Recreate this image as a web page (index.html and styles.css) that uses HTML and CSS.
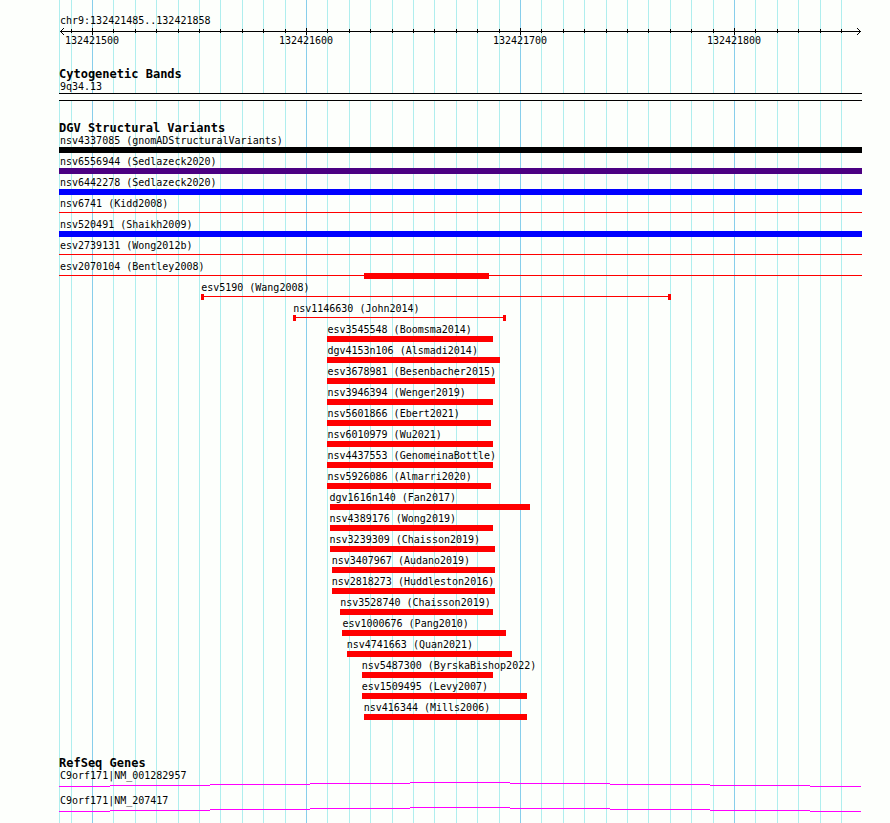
FILE: index.html
```html
<!DOCTYPE html>
<html lang="en">
<head>
    <meta charset="UTF-8">
    <meta name="viewport" content="width=device-width, initial-scale=1.0">
    <title>chr9:132421485..132421858</title>
    <link rel="stylesheet" href="styles.css">
</head>
<body>
    <main class="panel">
        <!-- Vertical guide lines, filled in by script.js -->
        <div class="grid" id="grid"></div>

        <section class="ruler">
            <h1 class="region">chr9:132421485..132421858</h1>
            <div class="axis" id="axis">
                <svg class="arrow" viewBox="0 0 4 7" shape-rendering="crispEdges"><path d="M0 3h1v1h-1zM1 2h1v1h-1zM1 4h1v1h-1zM2 1h1v1h-1zM2 5h1v1h-1zM3 0h1v1h-1zM3 6h1v1h-1z"/></svg>
                <svg class="arrow" viewBox="0 0 4 7" shape-rendering="crispEdges"><path d="M3 3h1v1h-1zM2 2h1v1h-1zM2 4h1v1h-1zM1 1h1v1h-1zM1 5h1v1h-1zM0 0h1v1h-1zM0 6h1v1h-1z"/></svg>
            </div>
            <div class="scale" id="scale"></div>
        </section>

        <section class="track bands">
            <h2>Cytogenetic Bands</h2>
            <p class="label label-full">9q34.13</p>
            <div class="band"></div>
        </section>

        <section class="track variants">
            <h2>DGV Structural Variants</h2>
            <ul id="variants"></ul>
        </section>

        <section class="track genes">
            <h2>RefSeq Genes</h2>
            <div class="gene">
                <p class="label label-full">C9orf171|NM_001282957</p>
                <svg class="intron" viewBox="0 0 803 5" preserveAspectRatio="none" shape-rendering="crispEdges"><path d="M0 4.5H51M51 3.5H151M151 2.5H251M251 1.5H351M351 .5H451M451 1.5H551M551 2.5H651M651 3.5H751M751 4.5H802"/></svg>
            </div>
            <div class="gene">
                <p class="label label-full">C9orf171|NM_207417</p>
                <svg class="intron" viewBox="0 0 803 5" preserveAspectRatio="none" shape-rendering="crispEdges"><path d="M0 4.5H51M51 3.5H151M151 2.5H251M251 1.5H351M351 .5H451M451 1.5H551M551 2.5H651M651 3.5H751M751 4.5H802"/></svg>
            </div>
        </section>
    </main>

    <script src="script.js"></script>
</body>
</html>
```
FILE: styles.css
```css
* {
    box-sizing: border-box;
    margin: 0;
    padding: 0;
}

body {
    background-color: #fdfffc;
    color: #000000;
    font-family: 'DejaVu Sans Mono', 'Liberation Mono', monospace;
    font-size: 10px;
}

.panel {
    position: relative;
    margin: 0 28px 0 59px;
    padding: 14px 0 4px;
}

/* Guide lines behind the tracks */
.grid {
    position: absolute;
    inset: 0;
    z-index: -1;
}

.grid-line {
    position: absolute;
    top: 0;
    bottom: 0;
    width: 1px;
    background-color: #afeeee;
}

.grid-line.major {
    background-color: #87ceeb;
}

/* Ruler */
.region {
    padding-left: 1px;
    font-size: 10px;
    font-weight: normal;
    line-height: 14px;
}

.axis {
    position: relative;
    display: flex;
    justify-content: space-between;
    height: 7px;
    padding: 0 1px;
    background: linear-gradient(#000000, #000000) 0 3px / 100% 1px no-repeat content-box;
}

.arrow {
    width: 4px;
    height: 7px;
}

.tick {
    position: absolute;
    top: 1px;
    width: 1px;
    height: 4px;
    background-color: #000000;
}

.tick.major {
    top: 0;
    height: 7px;
}

.scale {
    position: relative;
    height: 12px;
    line-height: 12px;
}

.scale span {
    position: absolute;
    transform: translateX(-50%);
}

/* Tracks */
.track h2 {
    font-size: 12px;
    font-weight: bold;
    line-height: 12px;
}

.bands {
    margin-top: 21px;
}

.variants {
    margin-top: 21px;
}

.genes {
    margin-top: 37px;
}

.label {
    line-height: 13px;
    white-space: nowrap;
}

.label-full {
    padding-left: 1px;
}

.band {
    height: 8px;
    border-top: 1px solid #000000;
    border-bottom: 1px solid #000000;
    background-color: #fdfffc;
}

.variants ul {
    list-style: none;
}

.variant {
    margin-bottom: 2px;
    color: #ff0000;
}

.variant .label {
    color: #000000;
}

.glyph {
    display: flex;
    justify-content: space-between;
    height: 6px;
}

.glyph.bar {
    background-color: currentColor;
}

.glyph.line,
.glyph.range {
    background: linear-gradient(currentColor, currentColor) 0 2px / 100% 1px no-repeat;
}

.glyph.range::before,
.glyph.range::after {
    content: '';
    width: 3px;
    background-color: currentColor;
}

.core {
    background-color: currentColor;
}

.black {
    color: #000000;
}

.purple {
    color: #4b0082;
}

.blue {
    color: #0000ff;
}

.gene {
    margin-bottom: 7px;
}

.gene:last-child {
    margin-bottom: 0;
    padding-bottom: 7px;
}

.intron {
    display: block;
    width: 100%;
    height: 5px;
    stroke: #ff00ff;
    stroke-width: 1;
    fill: none;
}
```
FILE: script.js
```javascript
// Positions are offsets from 132421000
const START = 485;
const END = 858;
const BASE = 132421000;

// Variants without start and end span the whole region
const variants = [
    { name: 'nsv4337085 (gnomADStructuralVariants)', type: 'bar', color: 'black' },
    { name: 'nsv6556944 (Sedlazeck2020)', type: 'bar', color: 'purple' },
    { name: 'nsv6442278 (Sedlazeck2020)', type: 'bar', color: 'blue' },
    { name: 'nsv6741 (Kidd2008)', type: 'line' },
    { name: 'nsv520491 (Shaikh2009)', type: 'bar', color: 'blue' },
    { name: 'esv2739131 (Wong2012b)', type: 'line' },
    { name: 'esv2070104 (Bentley2008)', type: 'line', core: [627, 685] },
    { name: 'esv5190 (Wang2008)', type: 'range', start: 551, end: 770 },
    { name: 'nsv1146630 (John2014)', type: 'range', start: 594, end: 693 },
    { name: 'esv3545548 (Boomsma2014)', type: 'bar', start: 610, end: 687 },
    { name: 'dgv4153n106 (Alsmadi2014)', type: 'bar', start: 610, end: 690 },
    { name: 'esv3678981 (Besenbacher2015)', type: 'bar', start: 610, end: 688 },
    { name: 'nsv3946394 (Wenger2019)', type: 'bar', start: 610, end: 687 },
    { name: 'nsv5601866 (Ebert2021)', type: 'bar', start: 610, end: 686 },
    { name: 'nsv6010979 (Wu2021)', type: 'bar', start: 610, end: 687 },
    { name: 'nsv4437553 (GenomeinaBottle)', type: 'bar', start: 610, end: 687 },
    { name: 'nsv5926086 (Almarri2020)', type: 'bar', start: 610, end: 686 },
    { name: 'dgv1616n140 (Fan2017)', type: 'bar', start: 611, end: 704 },
    { name: 'nsv4389176 (Wong2019)', type: 'bar', start: 611, end: 687 },
    { name: 'nsv3239309 (Chaisson2019)', type: 'bar', start: 611, end: 688 },
    { name: 'nsv3407967 (Audano2019)', type: 'bar', start: 612, end: 688 },
    { name: 'nsv2818273 (Huddleston2016)', type: 'bar', start: 612, end: 688 },
    { name: 'nsv3528740 (Chaisson2019)', type: 'bar', start: 616, end: 687 },
    { name: 'esv1000676 (Pang2010)', type: 'bar', start: 617, end: 693 },
    { name: 'nsv4741663 (Quan2021)', type: 'bar', start: 619, end: 696 },
    { name: 'nsv5487300 (ByrskaBishop2022)', type: 'bar', start: 626, end: 687 },
    { name: 'esv1509495 (Levy2007)', type: 'bar', start: 626, end: 703 },
    { name: 'nsv416344 (Mills2006)', type: 'bar', start: 627, end: 703 }
];

// Base position to percent of the panel width
function toPercent(pos) {
    return (0.9 + (pos - START) * 2.14) / 803 * 100;
}

function add(parent, tag, className) {
    const el = document.createElement(tag);
    el.className = className;
    parent.appendChild(el);
    return el;
}

function place(el, start, end) {
    el.style.marginLeft = toPercent(start) + '%';
    el.style.width = 'calc(' + (toPercent(end) - toPercent(start)) + '% + 1px)';
}

// Guide lines, ticks and scale numbers
const grid = document.getElementById('grid');
const axis = document.getElementById('axis');
const scale = document.getElementById('scale');

add(grid, 'div', 'grid-line');
for (let pos = 490; pos < END; pos += 10) {
    const major = pos % 100 === 0 ? ' major' : '';
    add(grid, 'div', 'grid-line' + major).style.left = toPercent(pos) + '%';
    add(axis, 'div', 'tick' + major).style.left = toPercent(pos) + '%';
    if (major) {
        const number = add(scale, 'span', '');
        number.textContent = BASE + pos;
        number.style.left = toPercent(pos) + '%';
    }
}

// Variants
const list = document.getElementById('variants');
variants.forEach(function(v) {
    const row = add(list, 'li', 'variant ' + (v.color || ''));
    const label = add(row, 'p', 'label');
    const glyph = add(row, 'div', 'glyph ' + v.type);
    label.textContent = v.name;

    if (v.start) {
        label.style.marginLeft = toPercent(v.start) + '%';
        place(glyph, v.start, v.end);
    } else {
        label.classList.add('label-full');
    }
    if (v.core) {
        place(add(glyph, 'div', 'core'), v.core[0], v.core[1]);
    }
});
```
